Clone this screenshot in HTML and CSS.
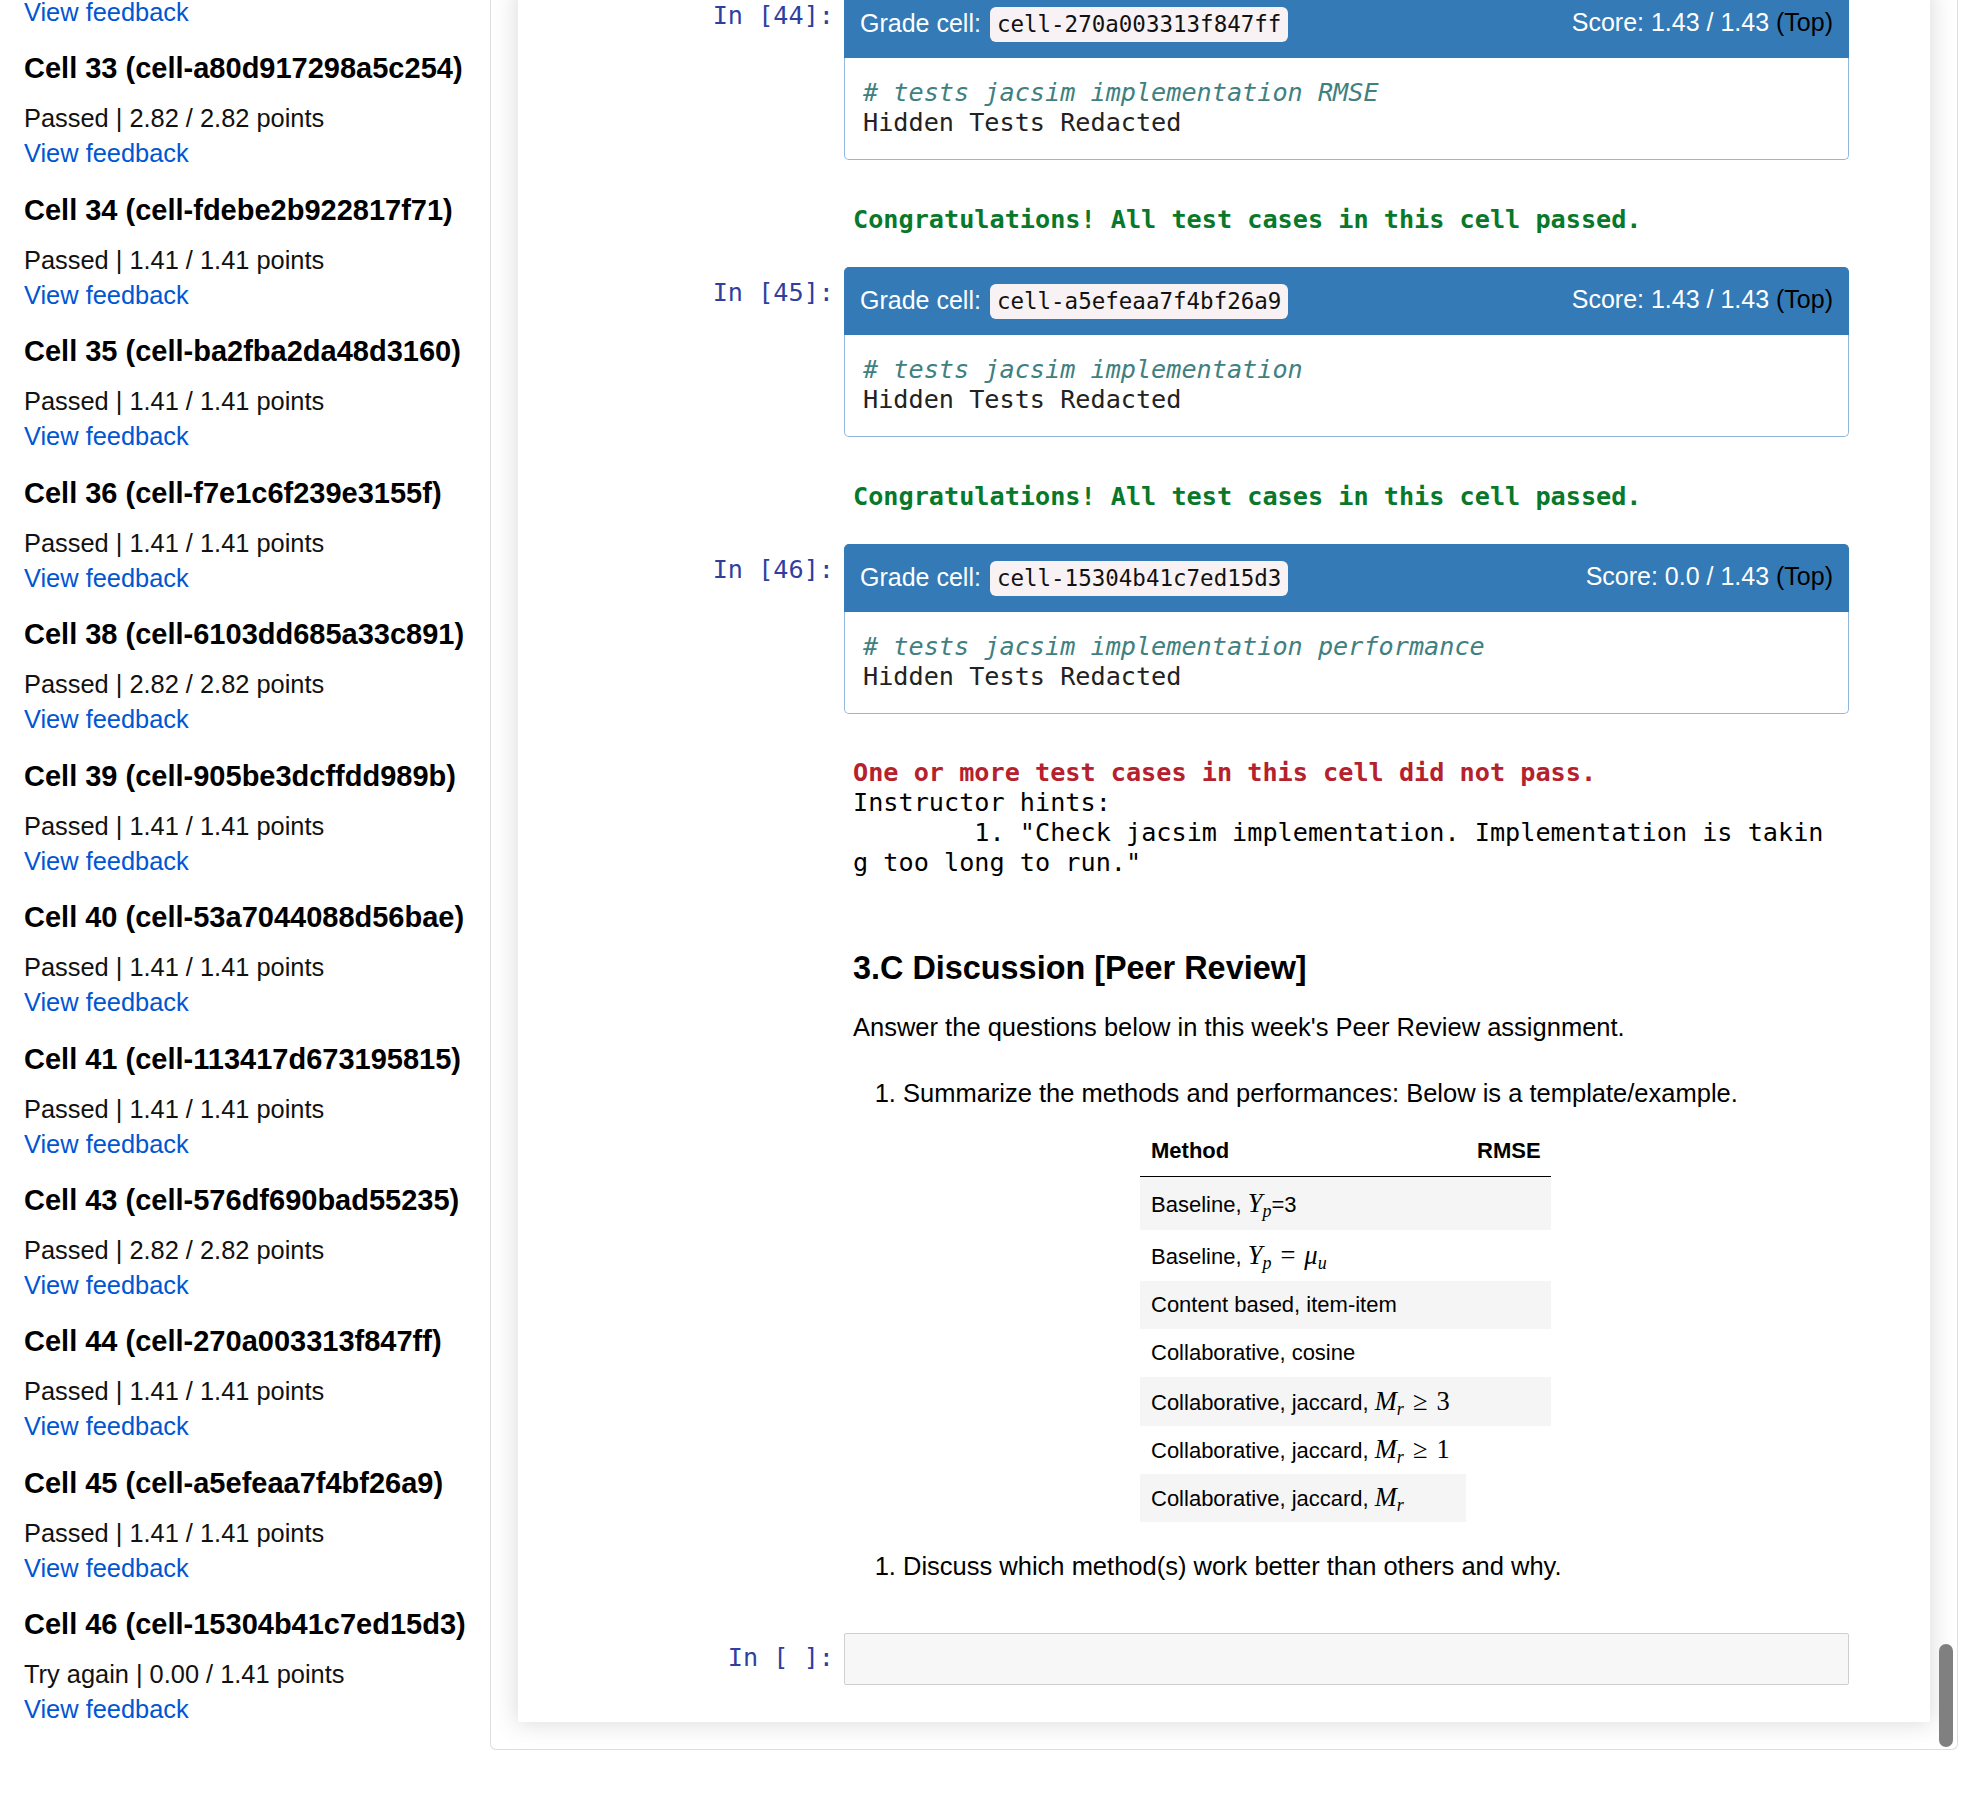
FILE: index.html
```html
<!DOCTYPE html>
<html lang="en">
<head>
<meta charset="utf-8">
<title>Feedback</title>
<link rel="stylesheet" href="styles.css">
</head>
<body>
<div class="page">
  <aside class="sidebar">
    <div class="fb-item partial"><a class="fb-link" href="#">View feedback</a></div>
    <div class="fb-item"><h4 class="fb-title">Cell 33 (cell-a80d917298a5c254)</h4><div class="fb-status">Passed | 2.82 / 2.82 points</div><a class="fb-link" href="#">View feedback</a></div>
    <div class="fb-item"><h4 class="fb-title">Cell 34 (cell-fdebe2b922817f71)</h4><div class="fb-status">Passed | 1.41 / 1.41 points</div><a class="fb-link" href="#">View feedback</a></div>
    <div class="fb-item"><h4 class="fb-title">Cell 35 (cell-ba2fba2da48d3160)</h4><div class="fb-status">Passed | 1.41 / 1.41 points</div><a class="fb-link" href="#">View feedback</a></div>
    <div class="fb-item"><h4 class="fb-title">Cell 36 (cell-f7e1c6f239e3155f)</h4><div class="fb-status">Passed | 1.41 / 1.41 points</div><a class="fb-link" href="#">View feedback</a></div>
    <div class="fb-item"><h4 class="fb-title">Cell 38 (cell-6103dd685a33c891)</h4><div class="fb-status">Passed | 2.82 / 2.82 points</div><a class="fb-link" href="#">View feedback</a></div>
    <div class="fb-item"><h4 class="fb-title">Cell 39 (cell-905be3dcffdd989b)</h4><div class="fb-status">Passed | 1.41 / 1.41 points</div><a class="fb-link" href="#">View feedback</a></div>
    <div class="fb-item"><h4 class="fb-title">Cell 40 (cell-53a7044088d56bae)</h4><div class="fb-status">Passed | 1.41 / 1.41 points</div><a class="fb-link" href="#">View feedback</a></div>
    <div class="fb-item"><h4 class="fb-title">Cell 41 (cell-113417d673195815)</h4><div class="fb-status">Passed | 1.41 / 1.41 points</div><a class="fb-link" href="#">View feedback</a></div>
    <div class="fb-item"><h4 class="fb-title">Cell 43 (cell-576df690bad55235)</h4><div class="fb-status">Passed | 2.82 / 2.82 points</div><a class="fb-link" href="#">View feedback</a></div>
    <div class="fb-item"><h4 class="fb-title">Cell 44 (cell-270a003313f847ff)</h4><div class="fb-status">Passed | 1.41 / 1.41 points</div><a class="fb-link" href="#">View feedback</a></div>
    <div class="fb-item"><h4 class="fb-title">Cell 45 (cell-a5efeaa7f4bf26a9)</h4><div class="fb-status">Passed | 1.41 / 1.41 points</div><a class="fb-link" href="#">View feedback</a></div>
    <div class="fb-item"><h4 class="fb-title">Cell 46 (cell-15304b41c7ed15d3)</h4><div class="fb-status">Try again | 0.00 / 1.41 points</div><a class="fb-link" href="#">View feedback</a></div>
  </aside>

  <main class="main">
    <div class="panel">
      <div class="cell">
        <div class="prompt">In&nbsp;[44]:</div>
        <div class="grade">
          <div class="grade-head">
            <div class="gh-left"><span>Grade cell:</span><code class="pill">cell-270a003313f847ff</code></div>
            <div class="gh-right">Score: 1.43 / 1.43 <span class="top">(Top)</span></div>
          </div>
          <div class="grade-body">
            <div class="cm"># tests jacsim implementation RMSE</div>
            <div class="code-line">Hidden Tests Redacted</div>
          </div>
        </div>
      </div>
      <div class="output"><pre class="out-ok">Congratulations! All test cases in this cell passed.</pre></div>

      <div class="cell">
        <div class="prompt">In&nbsp;[45]:</div>
        <div class="grade">
          <div class="grade-head">
            <div class="gh-left"><span>Grade cell:</span><code class="pill">cell-a5efeaa7f4bf26a9</code></div>
            <div class="gh-right">Score: 1.43 / 1.43 <span class="top">(Top)</span></div>
          </div>
          <div class="grade-body">
            <div class="cm"># tests jacsim implementation</div>
            <div class="code-line">Hidden Tests Redacted</div>
          </div>
        </div>
      </div>
      <div class="output"><pre class="out-ok">Congratulations! All test cases in this cell passed.</pre></div>

      <div class="cell">
        <div class="prompt">In&nbsp;[46]:</div>
        <div class="grade">
          <div class="grade-head">
            <div class="gh-left"><span>Grade cell:</span><code class="pill">cell-15304b41c7ed15d3</code></div>
            <div class="gh-right">Score: 0.0 / 1.43 <span class="top">(Top)</span></div>
          </div>
          <div class="grade-body">
            <div class="cm"># tests jacsim implementation performance</div>
            <div class="code-line">Hidden Tests Redacted</div>
          </div>
        </div>
      </div>
      <div class="output output-fail"><pre class="out-fail">One or more test cases in this cell did not pass.</pre><pre class="out-text">Instructor hints:
        1. "Check jacsim implementation. Implementation is taking too long to run."</pre></div>

      <div class="md">
        <h3>3.C Discussion [Peer Review]</h3>
        <p>Answer the questions below in this week's Peer Review assignment.</p>
        <ol>
          <li>Summarize the methods and performances: Below is a template/example.</li>
        </ol>
        <table>
          <colgroup><col class="c1"><col class="c2"></colgroup>
          <thead>
            <tr><th class="th-l">Method</th><th class="th-r">RMSE</th></tr>
          </thead>
          <tbody>
            <tr class="h53"><td>Baseline, <span class="math"><i>Y</i><sub>p</sub></span>=3</td><td></td></tr>
            <tr class="h51"><td>Baseline, <span class="math"><i>Y</i><sub>p</sub><span class="rel">=</span><i>μ</i><sub>u</sub></span></td><td></td></tr>
            <tr><td>Content based, item-item</td><td></td></tr>
            <tr><td>Collaborative, cosine</td><td></td></tr>
            <tr class="h49"><td>Collaborative, jaccard, <span class="math"><i>M</i><sub>r</sub><span class="rel">≥</span>3</span></td><td></td></tr>
            <tr><td>Collaborative, jaccard, <span class="math"><i>M</i><sub>r</sub><span class="rel">≥</span>1</span></td><td></td></tr>
            <tr><td>Collaborative, jaccard, <span class="math"><i>M</i><sub>r</sub></span></td></tr>
          </tbody>
        </table>
        <ol class="second">
          <li>Discuss which method(s) work better than others and why.</li>
        </ol>
      </div>

      <div class="cell input-cell">
        <div class="prompt">In&nbsp;[&nbsp;]:</div>
        <div class="input-box"></div>
      </div>
    </div>
    <div class="scroll-thumb"></div>
  </main>
</div>
</body>
</html>
```

FILE: styles.css
```css
html, body {
  margin: 0;
  height: 1800px;
  overflow: hidden;
  background: #fff;
}

body {
  font-family: "Liberation Sans", Arial, sans-serif;
  color: #000;
}

.page {
  display: flex;
  align-items: flex-start;
}

/* ---------- sidebar ---------- */
.sidebar {
  width: 490px;
  flex: none;
  box-sizing: border-box;
  padding-left: 24px;
  color: #111;
}

.fb-item {
  margin-bottom: 21.45px;
}

.fb-item.partial {
  margin-top: -5px;
}

.fb-title {
  margin: 0 0 16px;
  font-size: 29px;
  line-height: 34px;
  font-weight: 700;
  white-space: nowrap;
  color: #000;
}

.fb-status {
  font-size: 25.4px;
  line-height: 35px;
}

.fb-link {
  display: block;
  font-size: 25.4px;
  line-height: 35px;
  color: #0056d2;
  text-decoration: none;
}

/* ---------- main frame ---------- */
.main {
  position: relative;
  width: 1468px;
  flex: none;
  box-sizing: border-box;
  border: 1px solid #dedede;
  border-top: none;
  border-radius: 0 0 6px 6px;
  padding: 0 27px 27px 27px;
}

.panel {
  margin-top: -10px;
  background: #fff;
  box-shadow: 0 0 22px 2px rgba(87, 87, 87, 0.2);
  padding-bottom: 37px;
}

.scroll-thumb {
  position: absolute;
  right: 4px;
  bottom: 2px;
  width: 14px;
  height: 103px;
  border-radius: 7px;
  background: #808080;
}

/* ---------- cells ---------- */
.cell {
  display: flex;
  align-items: flex-start;
}

.prompt {
  width: 316px;
  flex: none;
  margin-right: 10px;
  padding-top: 11px;
  text-align: right;
  font-family: "DejaVu Sans Mono", monospace;
  font-size: 25.2px;
  line-height: 30px;
  color: #303f9f;
  white-space: nowrap;
}

.grade {
  width: 1005px;
  flex: none;
}

.grade-head {
  box-sizing: border-box;
  height: 68px;
  display: flex;
  align-items: center;
  justify-content: space-between;
  padding: 0 15px;
  background: #337ab7;
  border: 1px solid #337ab7;
  border-bottom: none;
  border-radius: 5px 5px 0 0;
  color: #fff;
  font-size: 25px;
  line-height: 30px;
}

.gh-left {
  display: flex;
  align-items: baseline;
  gap: 9px;
}

.gh-right {
  margin-bottom: 6px;
}

.pill {
  display: inline-block;
  padding: 2px 7px;
  border-radius: 6px;
  background: #f9f2f4;
  color: #111;
  font-family: "DejaVu Sans Mono", monospace;
  font-size: 22.5px;
  line-height: 31px;
}

.top {
  color: #000;
}

.grade-body {
  box-sizing: border-box;
  height: 102px;
  padding: 20px 18px 0;
  border: 1px solid #92b7dc;
  border-top: none;
  border-radius: 0 0 5px 5px;
  font-family: "DejaVu Sans Mono", monospace;
  font-size: 25.2px;
  line-height: 30px;
}

.cm {
  color: #408080;
  font-style: italic;
  white-space: pre;
}

.code-line {
  color: #222;
  white-space: pre;
}

/* ---------- outputs ---------- */
.output {
  margin-left: 326px;
  padding: 45px 0 32px 9px;
}

.output-fail {
  padding: 44px 0 0 9px;
}

.output pre {
  margin: 0;
  font-family: "DejaVu Sans Mono", monospace;
  font-size: 25.2px;
  line-height: 30px;
}

.out-ok {
  color: #08782a;
  font-weight: 700;
}

.out-fail {
  color: #b5212c;
  font-weight: 700;
}

.out-text {
  width: 978px;
  white-space: pre-wrap;
  word-break: break-all;
  color: #000;
}

/* ---------- markdown ---------- */
.md {
  margin-left: 326px;
  padding-left: 9px;
  width: 985px;
  font-size: 25.5px;
  line-height: 36px;
}

.md h3 {
  margin: 70px 0 0;
  font-size: 32.4px;
  line-height: 40px;
  font-weight: 700;
}

.md p {
  margin: 21px 0 0;
}

.md ol {
  margin: 30px 0 0;
  padding-left: 50px;
}

.md ol.second {
  margin-top: 26px;
}

.md table {
  margin: 15px auto 0;
  width: 411px;
  table-layout: fixed;
  border-collapse: collapse;
  font-size: 22px;
  line-height: 26px;
}

.md col.c1 {
  width: 326px;
}

.md col.c2 {
  width: 85px;
}

.md th {
  padding: 12px 11px;
  border-bottom: 1px solid #000;
  font-weight: 700;
}

.th-l {
  text-align: left;
}

.th-r {
  text-align: right;
}

.md td {
  height: 48px;
  padding: 0 11px;
  vertical-align: middle;
  white-space: nowrap;
}

.md tbody tr:nth-child(odd) td {
  background: #f5f5f5;
}

.md tr.h53 td {
  height: 53px;
}

.md tr.h51 td {
  height: 51px;
}

.md tr.h49 td {
  height: 49px;
}

.math {
  font-family: "Liberation Serif", "Times New Roman", serif;
  font-size: 26.5px;
}

.math i {
  font-style: italic;
}

.math sub {
  font-size: 18px;
  font-style: italic;
  vertical-align: -5px;
  line-height: 0;
}

.math .rel {
  margin: 0 9px;
}

/* ---------- empty input ---------- */
.input-cell {
  margin-top: 49px;
}

.input-cell .prompt {
  padding-top: 10px;
}

.input-box {
  box-sizing: border-box;
  width: 1005px;
  height: 52px;
  flex: none;
  background: #f7f7f7;
  border: 1px solid #cfcfcf;
  border-radius: 2px;
}
```
